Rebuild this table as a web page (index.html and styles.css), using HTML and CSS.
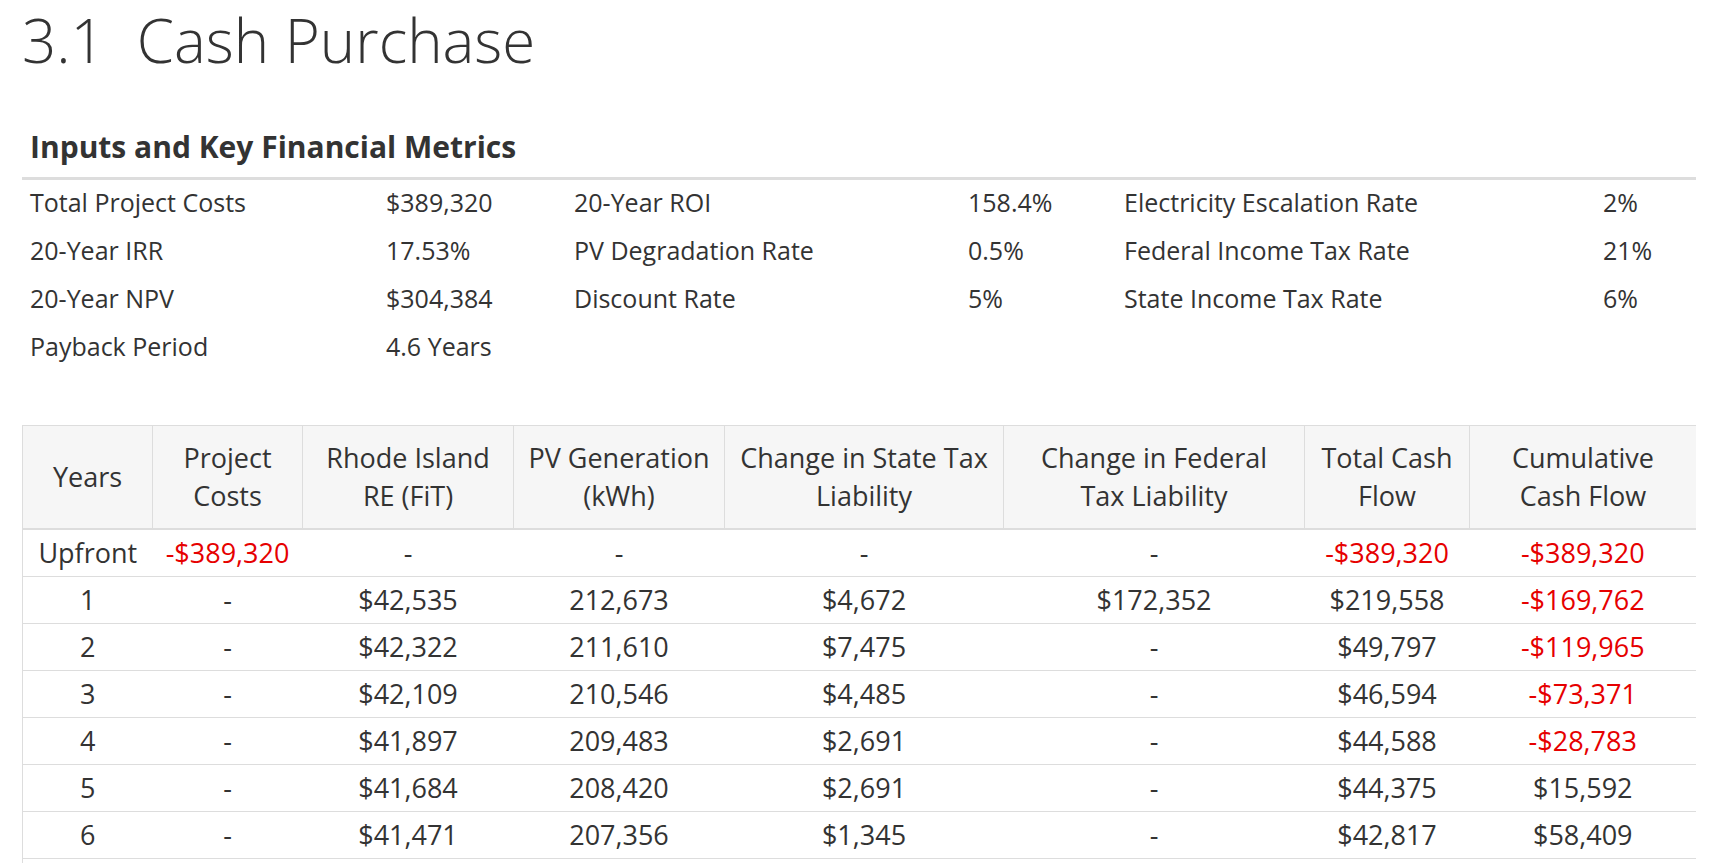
FILE: index.html
```html
<!DOCTYPE html>
<html lang="en">
<head>
<meta charset="utf-8">
<title>3.1 Cash Purchase</title>
<link rel="stylesheet" href="styles.css">
</head>
<body>
<div class="page">
  <h1 class="title"><span class="num">3.1</span>Cash Purchase</h1>

  <h3 class="section-head">Inputs and Key Financial Metrics</h3>
  <div class="metrics">
    <span>Total Project Costs</span><span>$389,320</span>
    <span>20-Year ROI</span><span>158.4%</span>
    <span>Electricity Escalation Rate</span><span>2%</span>

    <span>20-Year IRR</span><span>17.53%</span>
    <span>PV Degradation Rate</span><span>0.5%</span>
    <span>Federal Income Tax Rate</span><span>21%</span>

    <span>20-Year NPV</span><span>$304,384</span>
    <span>Discount Rate</span><span>5%</span>
    <span>State Income Tax Rate</span><span>6%</span>

    <span>Payback Period</span><span>4.6 Years</span>
    <span></span><span></span><span></span><span></span>
  </div>

  <table class="cash-table">
    <colgroup>
      <col class="c1"><col class="c2"><col class="c3"><col class="c4">
      <col class="c5"><col class="c6"><col class="c7"><col class="c8">
    </colgroup>
    <thead>
      <tr>
        <th>Years</th>
        <th>Project<br>Costs</th>
        <th>Rhode Island<br>RE (FiT)</th>
        <th>PV Generation<br>(kWh)</th>
        <th>Change in State Tax<br>Liability</th>
        <th>Change in Federal<br>Tax Liability</th>
        <th>Total Cash<br>Flow</th>
        <th>Cumulative<br>Cash Flow</th>
      </tr>
    </thead>
    <tbody>
      <tr><td>Upfront</td><td class="neg">-$389,320</td><td>-</td><td>-</td><td>-</td><td>-</td><td class="neg">-$389,320</td><td class="neg">-$389,320</td></tr>
      <tr><td>1</td><td>-</td><td>$42,535</td><td>212,673</td><td>$4,672</td><td>$172,352</td><td>$219,558</td><td class="neg">-$169,762</td></tr>
      <tr><td>2</td><td>-</td><td>$42,322</td><td>211,610</td><td>$7,475</td><td>-</td><td>$49,797</td><td class="neg">-$119,965</td></tr>
      <tr><td>3</td><td>-</td><td>$42,109</td><td>210,546</td><td>$4,485</td><td>-</td><td>$46,594</td><td class="neg">-$73,371</td></tr>
      <tr><td>4</td><td>-</td><td>$41,897</td><td>209,483</td><td>$2,691</td><td>-</td><td>$44,588</td><td class="neg">-$28,783</td></tr>
      <tr><td>5</td><td>-</td><td>$41,684</td><td>208,420</td><td>$2,691</td><td>-</td><td>$44,375</td><td>$15,592</td></tr>
      <tr><td>6</td><td>-</td><td>$41,471</td><td>207,356</td><td>$1,345</td><td>-</td><td>$42,817</td><td>$58,409</td></tr>
      <tr class="spill"><td></td><td></td><td></td><td></td><td></td><td></td><td></td><td></td></tr>
    </tbody>
  </table>
</div>
</body>
</html>
```

FILE: styles.css
```css
html, body {
  margin: 0;
  padding: 0;
  background: #ffffff;
  overflow: hidden;
}

body {
  font-family: "Open Sans", "Liberation Sans", sans-serif;
  color: #333333;
}

.page {
  width: 1674px;
  margin-left: 22px;
  height: 863px;
  overflow: hidden;
}

.title {
  margin: 0;
  font-size: 60px;
  line-height: 80px;
  font-weight: 300;
  color: #333333;
}

.title .num {
  margin-right: 32px;
}

.section-head {
  margin: 47px 0 0;
  padding: 0 8px 10px;
  font-size: 30px;
  line-height: 40px;
  font-weight: 700;
  color: #333333;
  border-bottom: 3px solid #dddddd;
}

.metrics {
  display: grid;
  grid-template-columns: 356px 188px 394px 156px 479px 101px;
  grid-auto-rows: 48px;
  align-items: start;
  font-size: 25px;
  line-height: 44px;
}

.metrics span {
  padding-left: 8px;
  white-space: nowrap;
}

.cash-table {
  margin-top: 53px;
  width: 1674px;
  table-layout: fixed;
  border-collapse: collapse;
  border: 1px solid #dddddd;
  font-size: 27px;
  line-height: 38px;
}

.c1 { width: 130px; }
.c2 { width: 150px; }
.c3 { width: 211px; }
.c4 { width: 211px; }
.c5 { width: 279px; }
.c6 { width: 301px; }
.c7 { width: 165px; }
.c8 { width: 227px; }

.cash-table th {
  background: #f6f6f6;
  font-weight: 400;
  padding: 13px 4px 13px;
  border: 1px solid #dddddd;
  border-bottom: 2px solid #dddddd;
  text-align: center;
  vertical-align: middle;
  white-space: nowrap;
}

.cash-table td {
  padding: 4px 4px;
  border-top: 1px solid #dddddd;
  text-align: center;
  white-space: nowrap;
}

.cash-table .spill td {
  height: 38px;
}

.cash-table .neg {
  color: #e60000;
}
```
